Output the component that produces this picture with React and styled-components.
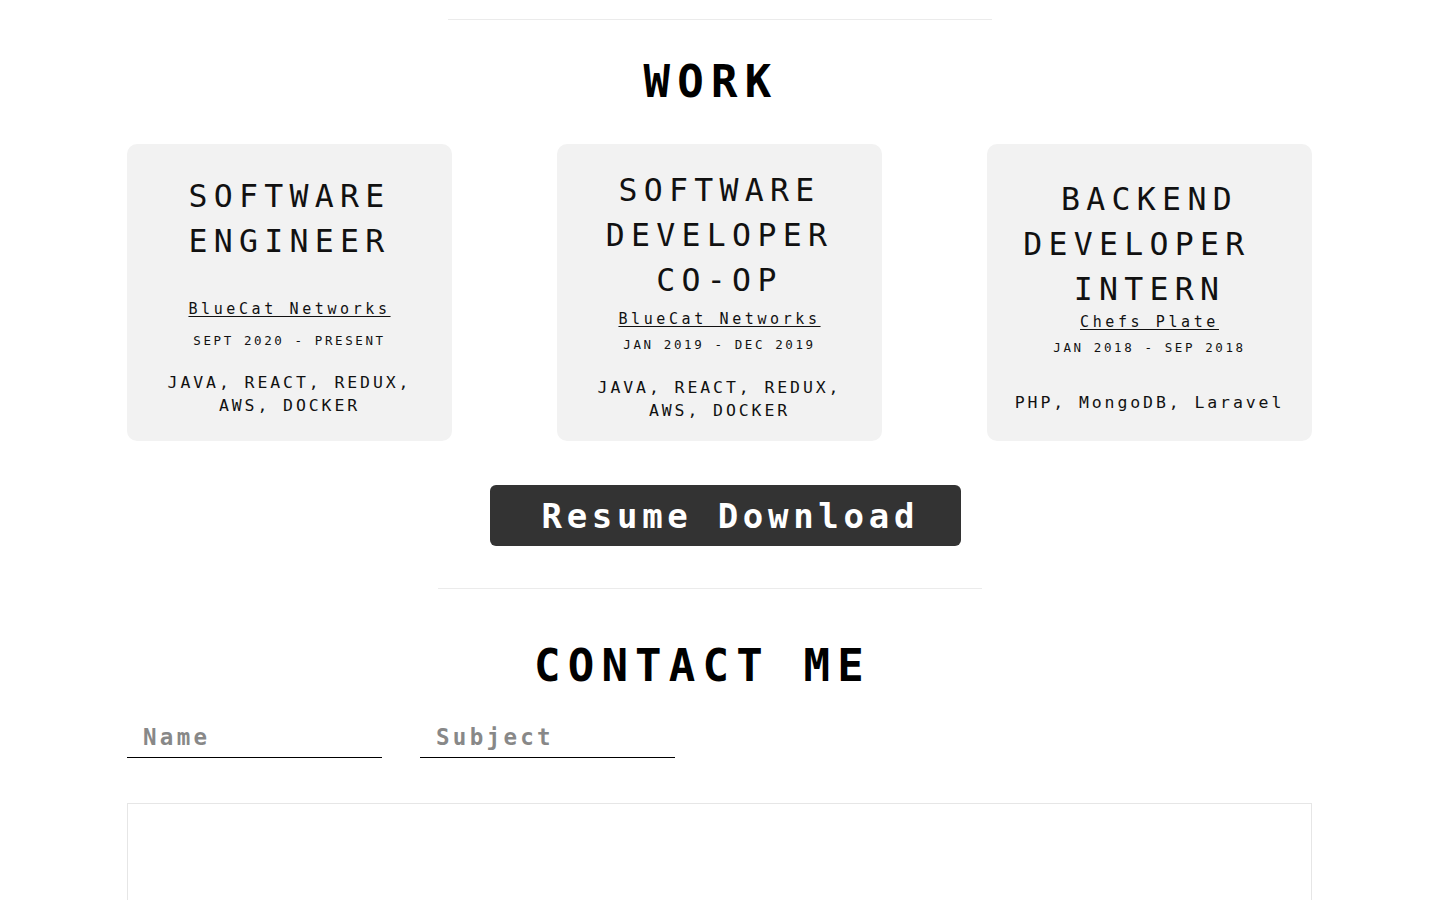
import React from "react";
import styled, { createGlobalStyle } from "styled-components";

const jobs = [
    {
        title: "SOFTWARE ENGINEER",
        company: "BlueCat Networks",
        dates: "SEPT 2020 - PRESENT",
        tech: "JAVA, REACT, REDUX, AWS, DOCKER",
        gaps: [35, 14, 22],
    },
    {
        title: "SOFTWARE DEVELOPER CO-OP",
        company: "BlueCat Networks",
        dates: "JAN 2019 - DEC 2019",
        tech: "JAVA, REACT, REDUX, AWS, DOCKER",
        gaps: [6, 8, 23],
    },
    {
        title: "BACKEND DEVELOPER\u00a0 INTERN",
        company: "Chefs Plate",
        dates: "JAN 2018 - SEP 2018",
        tech: "PHP, MongoDB, Laravel",
        gaps: [0, 8, 35],
    },
];

const App = () => {
    return (
        <Page>
            <GlobalStyle />
            <Divider />
            <Heading $top={34} $pad={18}>WORK</Heading>
            <Container>
                <CardRow>
                    {jobs.map((job) => (
                        <Card key={job.title + job.dates}>
                            <Title>{job.title}</Title>
                            <Company href="#" $gap={job.gaps[0]}>{job.company}</Company>
                            <Dates $gap={job.gaps[1]}>{job.dates}</Dates>
                            <Tech $gap={job.gaps[2]}>{job.tech}</Tech>
                        </Card>
                    ))}
                </CardRow>
                <ButtonRow>
                    <ResumeButton href="#">Resume Download</ResumeButton>
                </ButtonRow>
            </Container>
            <Divider $top={42} $shift={10} />
            <Heading $top={49} $pad={35}>CONTACT ME</Heading>
            <Container>
                <FormRow>
                    <Field type="text" placeholder="Name" />
                    <Field type="text" placeholder="Subject" />
                </FormRow>
                <Message />
            </Container>
        </Page>
    )
}

export default App

const GlobalStyle = createGlobalStyle`
    body {
        margin: 0;
        background: #fff;
        color: #000;
        font-family: "DejaVu Sans Mono", "Liberation Mono", monospace;
    }
`

const Page = styled.main`
    height: 900px;
    overflow: hidden;
    padding-top: 19px;
    box-sizing: border-box;
`

const Divider = styled.div`
    width: 544px;
    height: 1px;
    background: #ebebeb;
    margin-top: ${props => props.$top || 0}px;
    margin-left: calc(50% - 272px - ${props => props.$shift || 0}px);
`

const Heading = styled.h2`
    margin: ${props => props.$top}px 0 0;
    padding-right: ${props => props.$pad || 0}px;
    font-size: 44px;
    line-height: 56px;
    font-weight: 700;
    letter-spacing: 7.2px;
    text-align: center;
`

const Container = styled.div`
    width: 1185px;
    margin-left: calc(50% - 593px);
`

const CardRow = styled.section`
    display: flex;
    justify-content: space-between;
    margin-top: 34px;
`

const Card = styled.article`
    width: 325px;
    height: 297px;
    box-sizing: border-box;
    padding: 5px 20px 0;
    background: #f2f2f2;
    border-radius: 10px;
    display: flex;
    flex-direction: column;
    justify-content: center;
    align-items: center;
    text-align: center;
    color: #111;
`

const Title = styled.h3`
    margin: 0;
    font-size: 31.5px;
    line-height: 45px;
    font-weight: 400;
    letter-spacing: 6.3px;
`

const Company = styled.a`
    margin-top: ${props => props.$gap}px;
    font-size: 15px;
    line-height: 20px;
    letter-spacing: 3.6px;
    color: #111;
    text-decoration: underline;
    text-underline-offset: 2px;
`

const Dates = styled.p`
    margin: ${props => props.$gap}px 0 0;
    font-size: 12.5px;
    line-height: 16px;
    letter-spacing: 2.6px;
`

const Tech = styled.p`
    margin: ${props => props.$gap}px 0 0;
    width: 100%;
    font-size: 16.5px;
    line-height: 23px;
    letter-spacing: 2.9px;
`

const ButtonRow = styled.div`
    display: flex;
    justify-content: center;
    padding-left: 11px;
    margin-top: 44px;
`

const ResumeButton = styled.a`
    display: flex;
    align-items: center;
    box-sizing: border-box;
    width: 471px;
    height: 61px;
    padding-left: 52px;
    background: #333;
    border-radius: 6px;
    color: #fff;
    font-size: 34px;
    font-weight: 700;
    letter-spacing: 4.7px;
    text-decoration: none;
`

const FormRow = styled.div`
    display: flex;
    gap: 38px;
    margin-top: 22px;
`

const Field = styled.input`
    width: 255px;
    height: 42px;
    box-sizing: border-box;
    padding: 0 16px;
    border: none;
    border-bottom: 1px solid #000;
    background: transparent;
    outline: none;
    font-family: inherit;
    font-size: 22.5px;
    font-weight: 700;
    letter-spacing: 3.3px;

    &::placeholder {
        color: #888;
    }
`

const Message = styled.textarea`
    display: block;
    width: 100%;
    height: 200px;
    box-sizing: border-box;
    margin-top: 45px;
    border: 1px solid #e6e6e6;
    resize: none;
    outline: none;
`
